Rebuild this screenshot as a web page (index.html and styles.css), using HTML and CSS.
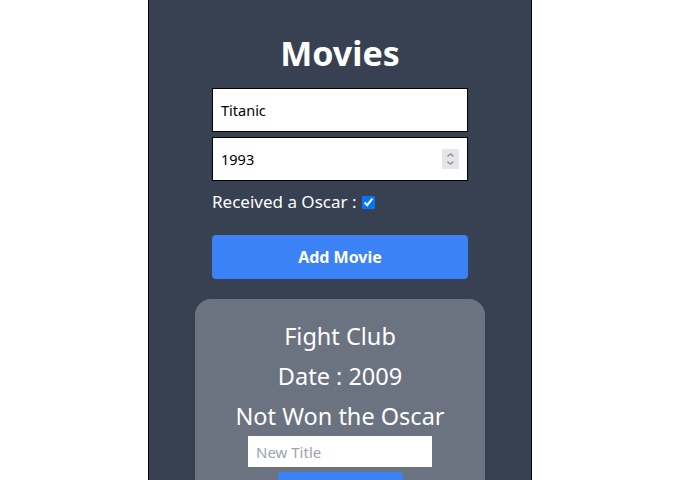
FILE: index.html
```html
<!DOCTYPE html>
<html>
<head>
<meta charset="utf-8">
<link rel="stylesheet" href="styles.css">
</head>
<body>
<div class="panel">
  <h1 class="title">Movies</h1>
  <form class="form">
    <input class="field" type="text" value="Titanic">
    <div class="num-wrap">
      <input class="field num" type="number" value="1993">
      <span class="spin" aria-hidden="true">
        <svg width="17" height="20" viewBox="0 0 17 20">
          <rect width="17" height="20" fill="#e5e5ea"/>
          <path d="M5.5 7.5 L8.5 4.8 L11.5 7.5" fill="none" stroke="#8a8a95" stroke-width="1.2"/>
          <path d="M5.5 12.5 L8.5 15.2 L11.5 12.5" fill="none" stroke="#8a8a95" stroke-width="1.2"/>
        </svg>
      </span>
    </div>
    <label class="oscar">Received a Oscar : <input class="check" type="checkbox" checked></label>
    <button class="add" type="button">Add Movie</button>
  </form>
  <div class="card">
    <p class="card-line">Fight Club</p>
    <p class="card-line">Date : 2009</p>
    <p class="card-line">Not Won the Oscar</p>
    <input class="rename" type="text" placeholder="New Title">
    <button class="update" type="button">Update</button>
  </div>
</div>
</body>
</html>
```
FILE: styles.css
```css
html, body {
  margin: 0;
  padding: 0;
  background: #ffffff;
  height: 100%;
  overflow: hidden;
}
body {
  font-family: "Noto Sans", "Open Sans", sans-serif;
}
.panel {
  width: 382px;
  margin-left: calc(50% - 191px);
  min-height: 480px;
  background: #374151;
  border-left: 1px solid #000;
  border-right: 1px solid #000;
  padding-top: 28px;
  display: flex;
  flex-direction: column;
  align-items: center;
}
.title {
  margin: 0 0 10px;
  font-size: 34px;
  line-height: 50px;
  font-weight: 700;
  color: #fff;
}
.form {
  width: 256px;
  display: flex;
  flex-direction: column;
  gap: 5px;
}
.field {
  width: 100%;
  height: 44px;
  box-sizing: border-box;
  border: 1px solid #000;
  padding: 0 8px;
  font-family: inherit;
  font-size: 14.5px;
  color: #000;
  background: #fff;
  outline: none;
  margin: 0;
  display: block;
}
.num-wrap {
  position: relative;
}
.num {
  -moz-appearance: textfield;
}
.num::-webkit-inner-spin-button,
.num::-webkit-outer-spin-button {
  -webkit-appearance: none;
  margin: 0;
}
.spin {
  position: absolute;
  right: 9px;
  top: 12px;
  line-height: 0;
}
.oscar {
  color: #fff;
  font-size: 17px;
  line-height: 32px;
  display: flex;
  align-items: center;
  gap: 6px;
}
.check {
  margin: 0;
  width: 13px;
  height: 13px;
}
.add {
  margin-top: 12px;
  height: 44px;
  border: none;
  border-radius: 4px;
  background: #3b82f6;
  color: #fff;
  font-family: inherit;
  font-size: 16px;
  font-weight: 700;
}
.card {
  margin-top: 20px;
  width: 290px;
  background: #6b7280;
  border-radius: 16px;
  padding-top: 17px;
  display: flex;
  flex-direction: column;
  align-items: center;
  min-height: 300px;
}
.card-line {
  margin: 0;
  color: #fff;
  font-size: 23.5px;
  line-height: 40px;
}
.rename {
  width: 184px;
  height: 31px;
  box-sizing: border-box;
  border: none;
  padding: 0 8px;
  font-family: inherit;
  font-size: 15px;
  margin: 0;
}
.rename::placeholder {
  color: #9ca3af;
}
.update {
  margin-top: 5px;
  width: 125px;
  height: 40px;
  border: none;
  border-radius: 4px;
  background: #3b82f6;
  color: #fff;
  font-family: inherit;
  font-size: 14px;
  font-weight: 700;
}
```
